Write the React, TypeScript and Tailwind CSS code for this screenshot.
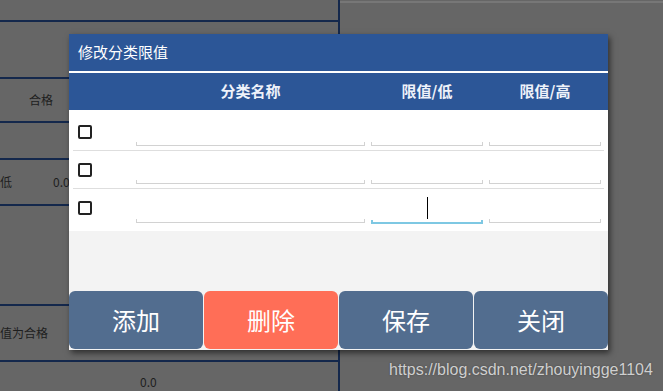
import React from 'react';

const cjk = { fontFamily: '"Noto Sans CJK SC", "Noto Sans", sans-serif' };

// one Android-style edit text underline with small ticks at each end
const Field: React.FC<{ width: string; focused?: boolean }> = ({ width, focused }) => (
    <div className={`${width} h-full relative`}>
        {focused ? (
            <>
                <div className="absolute left-[56px] top-[8px] w-px h-[22px] bg-black" />
                <div className="absolute left-0 right-0 bottom-[3px] h-[2px] bg-[#7ec8e3]" />
                <div className="absolute left-0 bottom-[3px] w-[2px] h-[4px] bg-[#7ec8e3]" />
                <div className="absolute right-0 bottom-[3px] w-[2px] h-[4px] bg-[#7ec8e3]" />
            </>
        ) : (
            <>
                <div className="absolute left-0 right-0 bottom-[4px] h-px bg-[#d2d2d2]" />
                <div className="absolute left-0 bottom-[4px] w-px h-[4px] bg-[#d2d2d2]" />
                <div className="absolute right-0 bottom-[4px] w-px h-[4px] bg-[#d2d2d2]" />
            </>
        )}
    </div>
);

const Row: React.FC<{ focused?: boolean; last?: boolean }> = ({ focused, last }) => (
    <div className={`flex items-stretch h-[38px] mx-[4px] ${last ? '' : 'border-b border-[#dedede]'}`}>
        <div className="w-[63px] pl-[5px] pt-[12px]">
            <div className="w-[14px] h-[14px] border-2 border-[#222] rounded-[2px]" />
        </div>
        <Field width="w-[229px]" />
        <div className="w-[6px]" />
        <Field width="w-[112px]" focused={focused} />
        <div className="w-[6px]" />
        <Field width="w-[112px]" />
    </div>
);

const App: React.FC = () => {
    const buttons = [
        { label: '添加', cls: 'bg-[#526d8f]' },
        { label: '删除', cls: 'bg-[#ff6e57]' },
        { label: '保存', cls: 'bg-[#526d8f]' },
        { label: '关闭', cls: 'bg-[#526d8f]' },
    ];

    return (
        <div className="w-[663px] h-[391px] bg-[#666666] relative overflow-hidden text-[12px] text-[#1e1e1e]" style={cjk}>
            {/* page underneath the dialog */}
            <div className="flex h-full">
                <div className="w-[338px] flex flex-col">
                    <div className="h-[22px] border-b-2 border-[#14284c]" />
                    <div className="h-[57px] border-b-2 border-[#14284c]" />
                    <div className="h-[44px] border-b-2 border-[#14284c] flex items-center pl-[29px]">合格</div>
                    <div className="h-[37px] border-b-2 border-[#14284c]" />
                    <div className="h-[46px] border-b-2 border-[#14284c] flex items-center">
                        <span className="w-[53px]">低</span>
                        <span>0.0</span>
                    </div>
                    <div className="h-[100px] border-b-2 border-[#14284c]" />
                    <div className="h-[56px] border-b-2 border-[#14284c] flex items-center">值为合格</div>
                    <div className="flex-1 pl-[140px] pt-[11px]">0.0</div>
                </div>
                <div className="w-[2px] bg-[#14284c]" />
                <div className="flex-1">
                    <div className="h-[1px]" />
                    <div className="h-[2px] bg-[#777777]" />
                </div>
            </div>

            <div className="absolute left-[389px] top-[358px] text-[16px] text-[#cfcfcf] [text-shadow:0_0_2px_rgba(0,0,0,0.35)]" style={{ fontFamily: '"Liberation Sans", Arial, sans-serif' }}>
                https://blog.csdn.net/zhouyingge1104
            </div>

            {/* dialog */}
            <div className="absolute left-[69px] top-[34px] w-[539px] h-[316px] bg-[#f3f3f3] flex flex-col shadow-[2px_3px_6px_rgba(0,0,0,0.55)]">
                <div className="h-[37px] bg-[#2c5697] flex items-center pl-[9px] text-white text-[15px]">修改分类限值</div>
                <div className="h-[2px] bg-white" />
                <div className="h-[37px] bg-[#2c5697] flex items-center text-[#eef2fa] text-[15px] font-bold">
                    <div className="w-[67px]" />
                    <div className="w-[229px] text-center">分类名称</div>
                    <div className="w-[6px]" />
                    <div className="w-[112px] text-center">限值/低</div>
                    <div className="w-[6px]" />
                    <div className="w-[112px] text-center">限值/高</div>
                </div>
                <div className="bg-white pt-[3px] pb-[4px]">
                    <Row />
                    <Row />
                    <Row focused last />
                </div>
                <div className="flex-1" />
                <div className="flex gap-px h-[58px] mb-px">
                    {buttons.map(b => (
                        <div key={b.label} className={`flex-1 rounded-[6px] flex items-center justify-center text-white text-[24px] ${b.cls}`}>
                            {b.label}
                        </div>
                    ))}
                </div>
            </div>
        </div>
    );
};

export default App;
